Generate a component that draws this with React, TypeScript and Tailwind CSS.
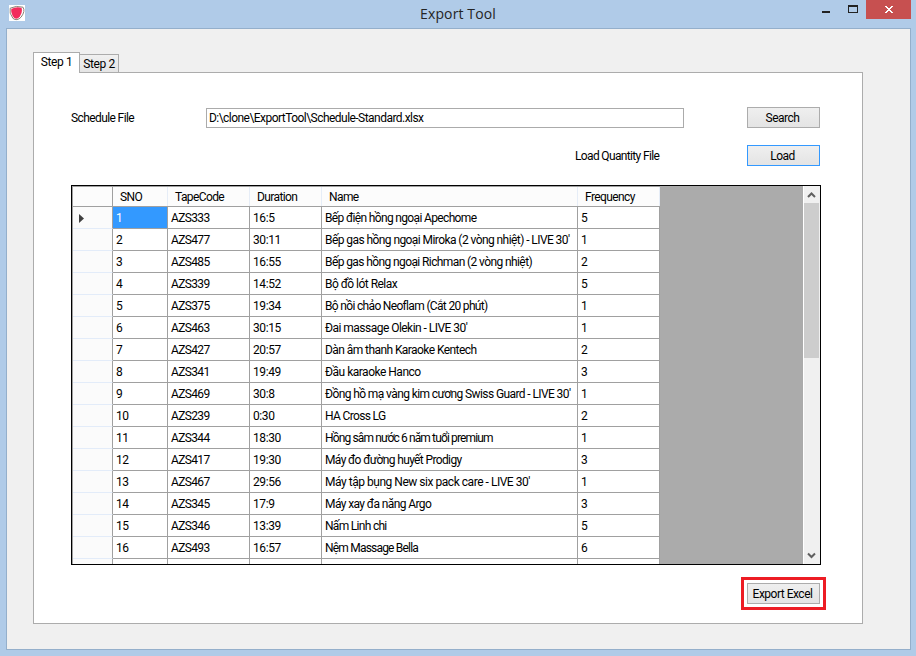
import React from "react";

type Row = { code: string; duration: string; name: string; freq: string; tracking: string };

const rows: Row[] = [
  { code: "AZS333", duration: "16:5", name: "Bếp điện hồng ngoại Apechome", freq: "5", tracking: "tracking-[-0.65px]" },
  { code: "AZS477", duration: "30:11", name: "Bếp gas hồng ngoại Miroka (2 vòng nhiệt) - LIVE 30'", freq: "1", tracking: "tracking-[-0.57px]" },
  { code: "AZS485", duration: "16:55", name: "Bếp gas hồng ngoại Richman (2 vòng nhiệt)", freq: "2", tracking: "tracking-[-0.6px]" },
  { code: "AZS339", duration: "14:52", name: "Bộ đồ lót Relax", freq: "5", tracking: "tracking-[-0.53px]" },
  { code: "AZS375", duration: "19:34", name: "Bộ nồi chảo Neoflam (Cắt 20 phút)", freq: "1", tracking: "tracking-[-0.67px]" },
  { code: "AZS463", duration: "30:15", name: "Đai massage Olekin - LIVE 30'", freq: "1", tracking: "tracking-[-0.53px]" },
  { code: "AZS427", duration: "20:57", name: "Dàn âm thanh Karaoke Kentech", freq: "2", tracking: "tracking-[-0.57px]" },
  { code: "AZS341", duration: "19:49", name: "Đầu karaoke Hanco", freq: "3", tracking: "tracking-[-0.5px]" },
  { code: "AZS469", duration: "30:8", name: "Đồng hồ mạ vàng kim cương Swiss Guard - LIVE 30'", freq: "1", tracking: "tracking-[-0.6px]" },
  { code: "AZS239", duration: "0:30", name: "HA Cross LG", freq: "2", tracking: "tracking-[-0.65px]" },
  { code: "AZS344", duration: "18:30", name: "Hồng sâm nước 6 năm tuổi premium", freq: "1", tracking: "tracking-[-0.87px]" },
  { code: "AZS417", duration: "19:30", name: "Máy đo đường huyết Prodigy", freq: "3", tracking: "tracking-[-0.63px]" },
  { code: "AZS467", duration: "29:56", name: "Máy tập bụng New six pack care - LIVE 30'", freq: "1", tracking: "tracking-[-0.47px]" },
  { code: "AZS345", duration: "17:9", name: "Máy xay đa năng Argo", freq: "3", tracking: "tracking-[-0.6px]" },
  { code: "AZS346", duration: "13:39", name: "Nấm Linh chi", freq: "5", tracking: "tracking-[-0.7px]" },
  { code: "AZS493", duration: "16:57", name: "Nệm Massage Bella", freq: "6", tracking: "tracking-[-0.8px]" },
];

const columns = "grid grid-cols-[40px_55px_82px_72px_256px_82px]";
const cell = "flex items-center border-r border-b border-[#a0a0a0] pl-[3px] whitespace-pre overflow-hidden";
const rowHead = "border-r border-b border-r-[#a0a0a0] border-b-[#e3ecf9] bg-[#fbfbfb] flex items-center";
const headCell = "flex items-center border-r border-[#e6edf7] pl-[7px] tracking-[-0.6px]";

function Button({ children, focused }: { children: React.ReactNode; focused?: boolean }) {
  return (
    <button
      className={`flex h-[21px] w-[73px] items-center justify-center border bg-linear-to-b from-[#efefef] to-[#e4e4e4] pr-[2px] tracking-[-0.5px] whitespace-nowrap ${
        focused ? "border-[#3399ff]" : "border-[#acacac]"
      }`}
    >
      {children}
    </button>
  );
}

function TitleBar() {
  return (
    <header className="flex h-7 items-start text-[#242424]">
      <div className="w-[130px] pt-[5px] pl-[9px]">
        <svg width="16" height="16" viewBox="0 0 16 16">
          <rect width="16" height="16" fill="#fff" />
          <path d="M1.2 3.2Q7 0.2 14 2.2Q16.6 6 12.2 12Q8 16.6 4 13.4Q-0.2 8 1.2 3.2Z" fill="#fff" stroke="#8c8578" strokeWidth="1" />
          <path d="M2.3 4Q7.5 1.2 12.6 3Q13.8 7 10.8 11.4Q8 15.4 5 12.8Q1.6 8.4 2.3 4Z" fill="#f22c5c" />
        </svg>
      </div>
      <h1 className="flex-1 text-center font-['Open_Sans',sans-serif] text-[14px] leading-7 tracking-[0.13px]">Export Tool</h1>
      <div className="flex w-[130px] items-start justify-end pr-[5px]">
        <svg className="shrink-0" width="75" height="19" viewBox="0 0 75 19" shapeRendering="crispEdges">
          <rect x="31" y="11" width="8" height="2" fill="#222" />
          <path d="M57 5h10v8h-10z M58 7v5h8v-5z" fill="#222" fillRule="evenodd" />
        </svg>
        <div className="flex h-[19px] w-[45px] items-center justify-center bg-[#c75050]">
          <svg width="8" height="7" viewBox="0 0 8 7" shapeRendering="crispEdges" fill="#fff">
            <path d="M0 0h2v1h1v1h2v-1h1v-1h2v1h-1v1h-1v1h-1v1h1v1h1v1h1v1h-2v-1h-1v-1h-2v1h-1v1h-2v-1h1v-1h1v-1h1v-1h-1v-1h-1v-1h-1z" />
          </svg>
        </div>
      </div>
    </header>
  );
}

function ScrollBar() {
  return (
    <div className="flex w-[17px] flex-col border-l border-white bg-[#f0f0f0]">
      <svg width="16" height="17" viewBox="0 0 16 17">
        <path d="M4 11 L7.5 7.5 L11 11" fill="none" stroke="#606060" strokeWidth="2" />
      </svg>
      <div className="h-[155px] w-[15px] bg-[#cdcdcd]" />
      <svg className="mt-auto" width="16" height="17" viewBox="0 0 16 17">
        <path d="M4 6.5 L7.5 10 L11 6.5" fill="none" stroke="#606060" strokeWidth="2" />
      </svg>
    </div>
  );
}

function DataGrid() {
  return (
    <div className="flex h-[380px] w-[750px] overflow-hidden border border-black bg-[#ababab]">
      <div className="w-[588px] shrink-0 border-l border-[#a0a0a0]">
        <div className={`${columns} h-[21px] border-t border-b border-[#a0a0a0] bg-[#fcfcfc]`}>
          <div className="border-r border-[#a0a0a0]" />
          <div className={headCell}>SNO</div>
          <div className={headCell}>TapeCode</div>
          <div className={headCell}>Duration</div>
          <div className={headCell}>Name</div>
          <div className={headCell}>Frequency</div>
        </div>
        <div className="bg-white">
          {rows.map((r, i) => (
            <div key={r.code} className={`${columns} h-[22px]`}>
              <div className={rowHead}>
                {i === 0 && (
                  <svg className="mt-[2px] ml-[6px]" width="5" height="9" viewBox="0 0 5 9">
                    <path d="M0 0L5 4.5L0 9Z" fill="#404040" />
                  </svg>
                )}
              </div>
              <div className={`${cell} ${i === 0 ? "bg-[#3399ff] text-white" : ""}`}>{i + 1}</div>
              <div className={`${cell} tracking-[-0.65px]`}>{r.code}</div>
              <div className={cell}>{r.duration}</div>
              <div className={`${cell} ${r.tracking}`}>{r.name}</div>
              <div className={cell}>{r.freq}</div>
            </div>
          ))}
          <div className={`${columns} h-[22px]`}>
            <div className={rowHead} />
            <div className={cell} />
            <div className={cell} />
            <div className={cell} />
            <div className={cell} />
            <div className={cell} />
          </div>
        </div>
      </div>
      <div className="flex-1" />
      <ScrollBar />
    </div>
  );
}

export default function App() {
  return (
    <div className="flex h-[656px] w-[916px] flex-col overflow-hidden bg-[#b0cbe8] font-['Roboto','Liberation_Sans',sans-serif] text-[12px] leading-4 tracking-[-0.4px] text-black">
      <TitleBar />
      <main className="mr-[5px] ml-[6px] flex h-[622px] flex-col border border-[#94afcb] bg-[#f0f0f0] pt-[23px] pl-[26px]">
        <div className="flex h-[20px] items-end">
          <div className="z-10 -mb-px flex h-[21px] w-[47px] justify-center border border-b-0 border-[#acacac] bg-white pt-[1px]">Step 1</div>
          <div className="flex h-[18px] w-[39px] items-center justify-center border border-b-0 border-l-0 border-[#acacac] bg-linear-to-b from-[#f0f0f0] to-[#e5e5e5]">
            Step 2
          </div>
        </div>
        <section className="flex h-[552px] w-[830px] flex-col border border-[#acacac] bg-white pt-[34px] pl-[37px]">
          <div className="flex h-[21px] w-[749px] items-center">
            <div className="w-[135px] tracking-[-0.6px]">Schedule File</div>
            <div className="mt-px flex h-[20px] w-[478px] items-center border border-[#ababab] pl-[2px] tracking-[-0.54px]">
              D:\clone\ExportTool\Schedule-Standard.xlsx
            </div>
            <div className="ml-auto">
              <Button>Search</Button>
            </div>
          </div>
          <div className="mt-[17px] flex h-[21px] w-[749px] items-center justify-between pl-[504px]">
            <div className="tracking-[-0.65px]">Load Quantity File</div>
            <Button focused>Load</Button>
          </div>
          <div className="mt-[19px]">
            <DataGrid />
          </div>
          <div className="mt-[12px] ml-[670px] flex h-[33px] w-[85px] items-center justify-center border-[3px] border-[#ed1c24]">
            <Button>Export Excel</Button>
          </div>
        </section>
      </main>
    </div>
  );
}
